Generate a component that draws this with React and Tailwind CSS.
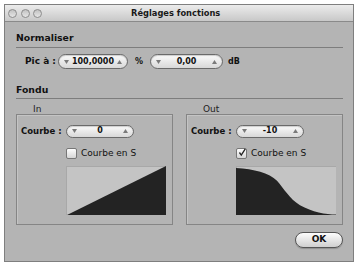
import React from 'react';

const Down = () => (
    <svg width="5" height="4" viewBox="0 0 5 4" className="shrink-0">
        <path d="M0 0 L5 0 L2.5 4 Z" fill="#7a7a7a" />
    </svg>
);

const Up = () => (
    <svg width="5" height="4" viewBox="0 0 5 4" className="shrink-0">
        <path d="M0 4 L5 4 L2.5 0 Z" fill="#7a7a7a" />
    </svg>
);

const Stepper = ({ value, size }) => (
    <div className={`flex items-center px-[5px] rounded-full border border-[#6a6a6a] bg-linear-to-b from-[#fbfbfb] to-[#d8d8d8] shadow-[inset_0_1px_1px_rgba(0,0,0,0.18)] ${size}`}>
        <Down />
        <span className="flex-1 text-center text-[8px] font-bold leading-none text-[#111]">{value}</span>
        <Up />
    </div>
);

const Checkbox = ({ checked }) => (
    <div className="w-[11px] h-[11px] rounded-[2px] border border-[#777] bg-linear-to-b from-[#fdfdfd] to-[#d6d6d6] flex items-center justify-center">
        {checked && (
            <svg width="11" height="11" viewBox="0 0 11 11" className="-mt-[3px] ml-[1px]">
                <path d="M2 5.5 L4.5 9 L10 0.5" fill="none" stroke="#222" strokeWidth="1.8" />
            </svg>
        )}
    </div>
);

const FadeBox = ({ title, curve, checked, children }) => (
    <div className="flex flex-col">
        <div className="h-[9px] pl-[17px] text-[9px] leading-[9px] text-[#222]">{title}</div>
        <div className="w-[157px] border border-[#858585] shadow-[inset_1px_1px_0_#c4c4c4] pt-[9px] pl-[4px] pb-[9px]">
            <div className="flex items-center h-[14px]">
                <span className="w-[45px] text-[8.5px] font-bold text-[#111]">Courbe :</span>
                <Stepper value={curve} size="w-[68px] h-[13px]" />
            </div>
            <div className="flex items-center gap-[4px] mt-[10px] pl-[45px]">
                <Checkbox checked={checked} />
                <span className="text-[9px] leading-[11px] text-[#111]">Courbe en S</span>
            </div>
            <div className="mt-[7px] ml-[45px] w-[100px] h-[49px] bg-[#c4c4c4] shadow-[inset_1px_1px_0_#a8a8a8]">
                {children}
            </div>
        </div>
    </div>
);

export default function App() {
    // S-curve of the fade-out graph
    const outPath = 'M0 2 C 18 3, 33 7, 41 15 C 48 23, 53 33, 64 40 C 76 47, 90 49.5, 100 49.5 L100 50 L0 50 Z';

    return (
        <div className="w-[357px] h-[265px] bg-white pt-[4px] pl-[4px] font-['DejaVu_Sans',sans-serif]">
            <div className="w-[350px] h-[258px] border border-[#7f7f7f] bg-[#b4b4b4] flex flex-col">
                {/* Title bar */}
                <div className="h-[17px] shrink-0 flex items-center pl-[3px] border-b border-[#8a8a8a] bg-linear-to-b from-[#ececec] to-[#c8c8c8]">
                    <div className="flex gap-[3.5px]">
                        {[0, 1, 2].map((i) => (
                            <div key={i} className="w-[9px] h-[9px] rounded-full border border-[#8c8c8c] bg-linear-to-b from-[#c2c2c2] to-[#e6e6e6]" />
                        ))}
                    </div>
                    <span className="ml-[89px] text-[8.3px] font-bold text-[#1a1a1a]">Réglages fonctions</span>
                </div>

                <div className="flex flex-col pl-[11px] pr-[10px]">
                    {/* Normaliser */}
                    <div className="mt-[9px] pb-[2px] border-b border-[#7d7d7d] text-[9.3px] leading-[14px] font-bold text-[#111]">Normaliser</div>
                    <div className="mt-[6px] h-[15px] flex items-center pl-[9px]">
                        <span className="w-[33px] text-[9px] font-bold text-[#111]">Pic à :</span>
                        <Stepper value="100,0000" size="w-[70px] h-[15px]" />
                        <span className="ml-[7px] w-[15px] text-[8px] font-bold text-[#111]">%</span>
                        <Stepper value="0,00" size="w-[73px] h-[15px]" />
                        <span className="ml-[5px] text-[8px] font-bold text-[#111]">dB</span>
                    </div>

                    {/* Fondu */}
                    <div className="mt-[14px] pb-[1px] border-b border-[#7d7d7d] text-[9.3px] leading-[14px] font-bold text-[#111]">Fondu</div>
                    <div className="mt-[6px] flex gap-[13px]">
                        <FadeBox title="In" curve="0" checked={false}>
                            <svg width="100" height="49" viewBox="0 0 100 50" preserveAspectRatio="none">
                                <path d="M1 50 L100 0 L100 50 Z" fill="#232323" />
                            </svg>
                        </FadeBox>
                        <FadeBox title="Out" curve="-10" checked={true}>
                            <svg width="100" height="49" viewBox="0 0 100 50" preserveAspectRatio="none">
                                <path d={outPath} fill="#232323" />
                            </svg>
                        </FadeBox>
                    </div>

                    <div className="mt-[7px] self-end w-[48px] h-[16px] rounded-full border border-[#555] bg-linear-to-b from-[#fdfdfd] to-[#cfcfcf] shadow-[0_1px_1px_rgba(0,0,0,0.2)] flex items-center justify-center text-[9px] font-bold text-[#111]">
                        OK
                    </div>
                </div>
            </div>
        </div>
    );
}
